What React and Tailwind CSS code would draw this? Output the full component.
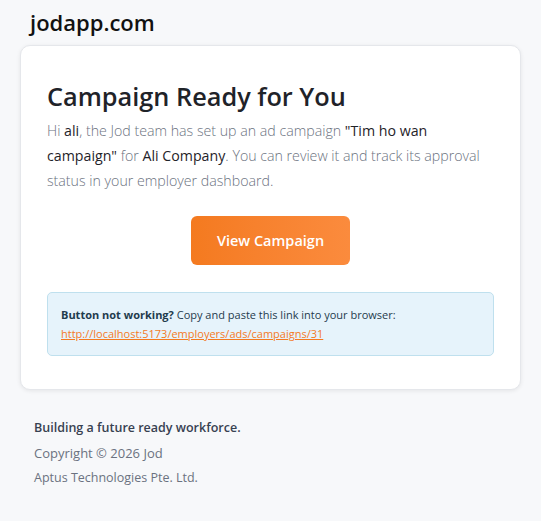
const App = () => {
    return (
        <div
            className="min-h-screen w-full bg-[#f7f8fa] px-5 pt-2 pb-10"
            style={{ fontFamily: '"Open Sans", "Noto Sans", sans-serif' }}>
            <h1 className="ml-[10px] text-[22px] font-semibold leading-[28px] text-[#111111]">
                jodapp.com
            </h1>
            <div className="mt-[9px] w-[501px] rounded-[10px] border border-[#e5e7eb] bg-white px-[26px] pt-[34px] pb-[33px] shadow-[0_1px_4px_rgba(0,0,0,0.08)]">
                <h2 className="text-[25.3px] font-semibold leading-[32px] text-[#1f2329]">
                    Campaign Ready for You
                </h2>
                <p className="mt-[6px] text-[14.2px] font-light leading-[25px] text-[#6b7280]">
                    Hi <span className="font-normal text-[#1f2329]">ali</span>, the Jod
                    team has set up an ad campaign{" "}
                    <span className="font-normal text-[#1f2329]">"Tim ho wan campaign"</span>{" "}
                    for <span className="font-normal text-[#1f2329]">Ali Company</span>. You
                    can review it and track its approval status in your employer dashboard.
                </p>
                <div className="mt-[23px] flex justify-center">
                    <a
                        href="#"
                        className="flex h-[49px] w-[159px] items-center justify-center rounded-[6px] bg-gradient-to-r from-[#f47a1f] to-[#fb8b3d] text-[14.5px] font-semibold text-white">
                        View Campaign
                    </a>
                </div>
                <div className="mt-[27px] rounded-[5px] border border-[#bfe0ee] bg-[#e6f3fb] px-[13px] pt-[12px] pb-[12px] text-[11px] leading-[19px] text-[#1f3b4d]">
                    <p>
                        <span className="font-bold">Button not working?</span> Copy and paste
                        this link into your browser:
                    </p>
                    <a
                        href="#"
                        className="text-[#f47a1f] underline">
                        http://localhost:5173/employers/ads/campaigns/31
                    </a>
                </div>
            </div>
            <div className="mt-[25px] ml-[14px] text-[12.5px] leading-[25px]">
                <p className="font-semibold text-[#374151]">Building a future ready workforce.</p>
                <p className="mt-[1px] text-[13px] text-[#6b7280]">Copyright © 2026 Jod</p>
                <p className="-mt-[1px] text-[#6b7280]">Aptus Technologies Pte. Ltd.</p>
            </div>
        </div>
    );
};

export default App;
